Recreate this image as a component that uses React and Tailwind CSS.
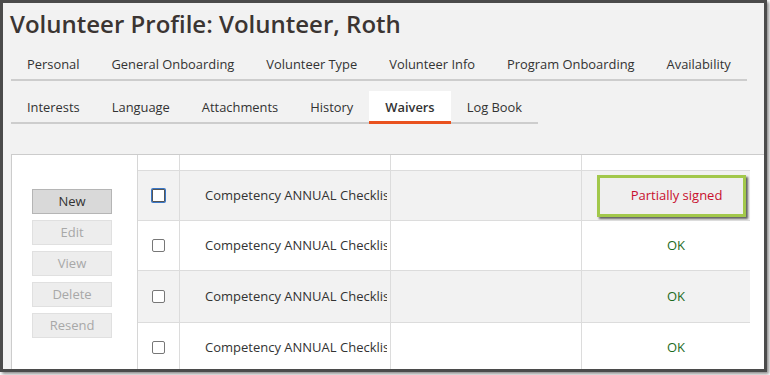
import React from "react";

const tabsTop = ["Personal", "General Onboarding", "Volunteer Type", "Volunteer Info", "Program Onboarding", "Availability"];
const tabsBottom = ["Interests", "Language", "Attachments", "History", "Waivers", "Log Book"];

const rows = [
  { status: "partial", bg: "bg-[#f2f2f2]", h: "h-[50px]", focus: true },
  { status: "ok", bg: "bg-white", h: "h-[50px]" },
  { status: "ok", bg: "bg-[#f2f2f2]", h: "h-[52px]" },
  { status: "ok", bg: "bg-white", h: "h-[50px]" },
];

const App = () => {
  return (
    <div className="w-[770px] h-[375px] bg-white overflow-hidden font-['Open_Sans',sans-serif] text-[#333]">
      <div className="w-[767px] h-[372px] border-[3px] border-[#4b4b4b] bg-[#f2f2f2] shadow-[2px_2px_3px_rgba(0,0,0,0.45)] overflow-hidden">
        <div className="pl-[8px]">
          {/* title */}
          <h1 className="pt-[5px] -ml-[1px] text-[24px] leading-[32px] font-semibold text-[#3b3532] whitespace-nowrap">
            Volunteer Profile: Volunteer, Roth
          </h1>

          {/* first tab row */}
          <div className="mt-[8px] inline-flex border-b-2 border-[#cdcdcd]">
            {tabsTop.map((t) => (
              <div key={t} className="px-4 h-[31px] leading-[33px] text-[12.9px] whitespace-nowrap">
                {t}
              </div>
            ))}
          </div>

          {/* second tab row */}
          <div className="mt-[10px] flex">
            <div className="inline-flex border-b-2 border-[#cdcdcd]">
              {tabsBottom.map((t) =>
                t === "Waivers" ? (
                  <div key={t} className="px-4 leading-[33px] text-[12.9px] font-semibold bg-white whitespace-nowrap border-b-[3px] border-[#e9521f] -mb-[2px] box-content h-[30px]">
                    {t}
                  </div>
                ) : (
                  <div key={t} className="px-4 h-[31px] leading-[33px] text-[12.9px] whitespace-nowrap">
                    {t}
                  </div>
                )
              )}
            </div>
          </div>

          {/* panel */}
          <div className="mt-[30px] w-[800px] h-[240px] bg-white border-t border-l border-[#cccccc] flex">
            <div className="w-[126px] shrink-0 border-r border-[#d6d6d6] pt-[34px] pl-[20px] flex flex-col gap-[6px]">
              <button className="w-[80px] h-[25px] bg-[#d9d9d9] border border-[#b5b5b5] text-[13px] text-[#333]">New</button>
              {["Edit", "View", "Delete", "Resend"].map((b) => (
                <button key={b} className="w-[80px] h-[25px] bg-[#ededed] border border-[#e0e0e0] text-[13px] text-[#a8a8a8]">
                  {b}
                </button>
              ))}
            </div>

            <div className="flex flex-col">
              {/* header */}
              <div className="flex h-[15px] w-[612px]">
                <div className="w-[42px] border-r border-[#dcdcdc]" />
                <div className="w-[211px] border-r border-[#dcdcdc]" />
                <div className="w-[191px] border-r border-[#dcdcdc]" />
                <div className="w-[168px]" />
              </div>

              {rows.map((r, i) => (
                <div key={i} className={`flex ${r.h} w-[612px] border-t border-[#dcdcdc] ${r.bg}`}>
                  <div className="w-[42px] border-r border-[#dcdcdc] flex items-center justify-center">
                    {r.focus ? (
                      <div className="w-[13px] h-[13px] border border-[#555] rounded-[1px] bg-white ring-1 ring-[#3a78c9]" />
                    ) : (
                      <div className="w-[13px] h-[13px] border border-[#777] rounded-[2px] bg-white" />
                    )}
                  </div>
                  <div className="w-[211px] border-r border-[#dcdcdc] flex items-center pl-[25px] pr-[3px] overflow-hidden">
                    <span className="text-[13px] whitespace-nowrap overflow-hidden">Competency ANNUAL Checklist</span>
                  </div>
                  <div className="w-[191px] border-r border-[#dcdcdc]" />
                  {r.status === "partial" ? (
                    <div className="w-[168px] flex items-center pl-[15px] pr-[4px]">
                      <div className="w-full h-[42px] border-[3px] border-[#a2c84b] bg-[#efefef] shadow-[2px_2px_2px_rgba(0,0,0,0.6)] flex items-center justify-center pl-[10px] text-[13px] text-[#c8102e]">
                        Partially signed
                      </div>
                    </div>
                  ) : (
                    <div className="w-[168px] flex items-center justify-center pl-[20px] text-[13px] text-[#1e6b1e]">OK</div>
                  )}
                </div>
              ))}
            </div>
          </div>
        </div>
      </div>
    </div>
  );
};

export default App;
